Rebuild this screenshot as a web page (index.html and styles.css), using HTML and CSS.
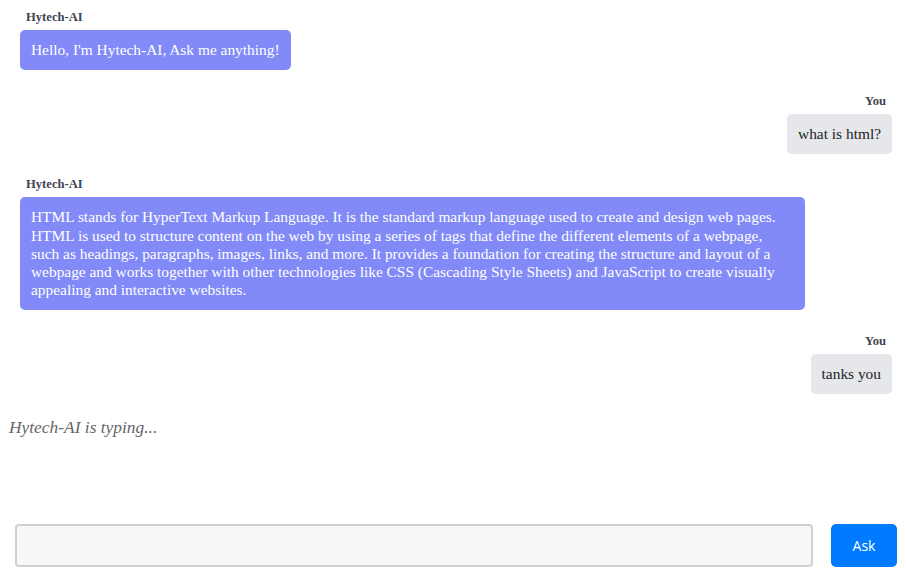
FILE: index.html
```html
<!DOCTYPE html>
<html>
<head>
<meta charset="utf-8">
<link rel="stylesheet" href="styles.css">
</head>
<body>
<div class="app">
  <div class="messages">
    <div class="msg bot">
      <div class="label">Hytech-AI</div>
      <div class="bubble">Hello, I'm Hytech-AI, Ask me anything!</div>
    </div>
    <div class="msg user">
      <div class="label">You</div>
      <div class="bubble">what is html?</div>
    </div>
    <div class="msg bot">
      <div class="label">Hytech-AI</div>
      <div class="bubble">HTML stands for HyperText Markup Language. It is the standard markup language used to create and design web pages. HTML is used to structure content on the web by using a series of tags that define the different elements of a webpage, such as headings, paragraphs, images, links, and more. It provides a foundation for creating the structure and layout of a webpage and works together with other technologies like CSS (Cascading Style Sheets) and JavaScript to create visually appealing and interactive websites.</div>
    </div>
    <div class="msg user">
      <div class="label">You</div>
      <div class="bubble">tanks you</div>
    </div>
  </div>
  <div class="typing">Hytech-AI is typing...</div>
  <form class="composer">
    <input class="field" type="text">
    <button class="ask" type="button">Ask</button>
  </form>
</div>
</body>
</html>
```
FILE: styles.css
```css
html, body {
  margin: 0;
  padding: 0;
  background: #ffffff;
}
body {
  font-family: "Liberation Serif", "Times New Roman", serif;
  width: 906px;
  height: 571px;
  overflow: hidden;
}
.app {
  display: flex;
  flex-direction: column;
  height: 571px;
}
.messages {
  display: flex;
  flex-direction: column;
  padding: 10px 14px 0 20px;
}
.msg {
  display: flex;
  flex-direction: column;
  margin-bottom: 23.5px;
}
.msg.bot { align-items: flex-start; }
.msg.user { align-items: flex-end; }
.label {
  font-size: 12.6px;
  line-height: 14px;
  font-weight: bold;
  color: #3f4352;
  margin: 0 6px 6px 6px;
}
.bubble {
  max-width: 90%;
  box-sizing: border-box;
  padding: 11px;
  font-size: 15.4px;
  line-height: 18.2px;
  border-radius: 5px;
}
.bot .bubble {
  background: #818af7;
  color: #ffffff;
}
.user .bubble {
  background: #e5e7eb;
  color: #222222;
}
.typing {
  margin: -1px 0 0 9px;
  font-style: italic;
  font-size: 17.4px;
  line-height: 20px;
  color: #666666;
}
.composer {
  margin-top: auto;
  display: flex;
  align-items: stretch;
  padding: 0 9px 4px 15px;
  gap: 18px;
}
.field {
  flex: 1;
  height: 43px;
  box-sizing: border-box;
  margin: 0;
  border: 2px solid #d0d0d0;
  border-radius: 4px;
  background: #f7f7f7;
  outline: none;
}
.ask {
  width: 66px;
  height: 43px;
  margin: 0;
  border: none;
  border-radius: 5px;
  background: #007bff;
  color: #ffffff;
  font-family: "Open Sans", "DejaVu Sans", sans-serif;
  font-size: 14px;
}
```
